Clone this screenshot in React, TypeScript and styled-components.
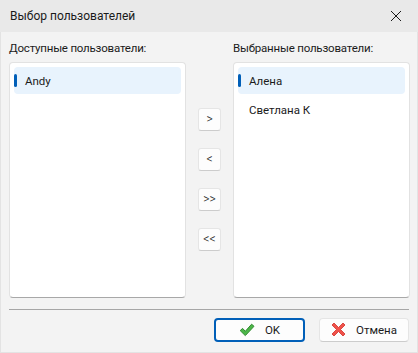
import React from 'react'
import styled, { createGlobalStyle } from 'styled-components'

const GlobalStyle = createGlobalStyle`
  html, body {
    margin: 0;
    padding: 0;
    background: #f3f3f3;
  }
  * {
    box-sizing: border-box;
  }
`

const font = `Roboto, 'Noto Sans', 'Liberation Sans', sans-serif`

const Window = styled.div`
  width: 418px;
  height: 353px;
  display: flex;
  flex-direction: column;
  background: #f3f3f3;
  border: 1px solid #e3e3e3;
  border-top: none;
  font-family: ${font};
  font-size: 11.5px;
  color: #1b1b1b;
`

const TitleBar = styled.div`
  height: 32px;
  display: flex;
  align-items: center;
  justify-content: space-between;
  background: #e9e9e9;
  padding: 0 10px 0 10px;
  margin: 0 -1px;
`

const Title = styled.span`
  font-size: 12px;
  color: #1a1a1a;
`

const CloseButton = styled.button`
  width: 24px;
  height: 24px;
  border: none;
  background: transparent;
  display: flex;
  align-items: center;
  justify-content: center;
  padding: 0;
`

const Content = styled.div`
  display: grid;
  grid-template-columns: 177px 47px 177px;
  grid-template-rows: 30px 236px;
  padding: 0 0 0 8px;
`

const Label = styled.div`
  display: flex;
  align-items: center;
  padding-top: 2px;
  letter-spacing: -0.2px;
`

const ListBox = styled.div`
  background: #ffffff;
  border: 1px solid #e2e2e2;
  border-bottom-color: #a8a8a8;
  border-radius: 4px;
  padding: 4px 4px;
  display: flex;
  flex-direction: column;
  gap: 2px;
`

const Item = styled.div<{ $selected?: boolean }>`
  position: relative;
  height: 27px;
  border-radius: 4px;
  display: flex;
  align-items: center;
  padding-left: 11px;
  background: ${(p) => (p.$selected ? '#e8f3fd' : 'transparent')};

  &::before {
    content: '';
    display: ${(p) => (p.$selected ? 'block' : 'none')};
    position: absolute;
    left: 0;
    top: 7px;
    width: 3px;
    height: 13px;
    border-radius: 2px;
    background: #005fb8;
  }
`

const MoveColumn = styled.div`
  display: flex;
  flex-direction: column;
  align-items: center;
  gap: 17px;
  padding-top: 46px;
`

const MoveButton = styled.button`
  width: 23px;
  height: 23px;
  padding: 0 0 2px;
  background: #fdfdfd;
  border: 1px solid #e5e5e5;
  border-bottom-color: #cccccc;
  border-radius: 3px;
  font-family: ${font};
  font-size: 12px;
  font-weight: 300;
  color: #1b1b1b;
  display: flex;
  align-items: center;
  justify-content: center;
`

const Separator = styled.div`
  height: 1px;
  background: #a6a6a6;
  margin: 11px 8px 0 8px;
`

const Footer = styled.div`
  display: flex;
  justify-content: flex-end;
  gap: 14px;
  padding: 8px 8px 0 0;
`

const DialogButton = styled.button<{ $default?: boolean }>`
  width: ${(p) => (p.$default ? '91px' : '90px')};
  height: 24px;
  background: #fdfdfd;
  border: ${(p) => (p.$default ? '2px solid #005fb8' : '1px solid #e5e5e5')};
  border-bottom-color: ${(p) => (p.$default ? '#005fb8' : '#cccccc')};
  border-radius: 4px;
  display: flex;
  align-items: center;
  justify-content: center;
  gap: 10px;
  font-family: ${font};
  font-size: 11.5px;
  color: #1b1b1b;
  padding: 0 0 1px;
`

const CheckIcon = () => (
  <svg width="16" height="14" viewBox="0 0 16 14">
    <path
      d="M1.2 7.6 L3.6 5.4 L6.3 8.3 L12.6 1.2 L15 3.3 L6.3 12.6 Z"
      fill="#4cb648"
      stroke="#2e8a2e"
      strokeWidth="1"
      strokeLinejoin="round"
    />
  </svg>
)

const CrossIcon = () => (
  <svg width="15" height="15" viewBox="0 0 15 15">
    <path
      d="M1 3 L3 1 L7.5 5.5 L12 1 L14 3 L9.5 7.5 L14 12 L12 14 L7.5 9.5 L3 14 L1 12 L5.5 7.5 Z"
      fill="#f0524a"
      stroke="#d0302a"
      strokeWidth="0.8"
      strokeLinejoin="round"
    />
  </svg>
)

const App = () => {
  const available = ['Andy']
  const selected = ['Алена', 'Светлана К']
  return (
    <Window>
      <GlobalStyle />
      <TitleBar>
        <Title>Выбор пользователей</Title>
        <CloseButton>
          <svg width="12" height="12" viewBox="0 0 12 12">
            <path d="M1 1 L11 11 M11 1 L1 11" stroke="#1a1a1a" strokeWidth="1" />
          </svg>
        </CloseButton>
      </TitleBar>
      <Content>
        <Label>Доступные пользователи:</Label>
        <div />
        <Label>Выбранные пользователи:</Label>
        <ListBox>
          {available.map((name, i) => (
            <Item key={name} $selected={i === 0}>
              {name}
            </Item>
          ))}
        </ListBox>
        <MoveColumn>
          <MoveButton>&gt;</MoveButton>
          <MoveButton>&lt;</MoveButton>
          <MoveButton>&gt;&gt;</MoveButton>
          <MoveButton>&lt;&lt;</MoveButton>
        </MoveColumn>
        <ListBox>
          {selected.map((name, i) => (
            <Item key={name} $selected={i === 0}>
              {name}
            </Item>
          ))}
        </ListBox>
      </Content>
      <Separator />
      <Footer>
        <DialogButton $default>
          <CheckIcon />
          OK
        </DialogButton>
        <DialogButton>
          <CrossIcon />
          Отмена
        </DialogButton>
      </Footer>
    </Window>
  )
}

export default App
